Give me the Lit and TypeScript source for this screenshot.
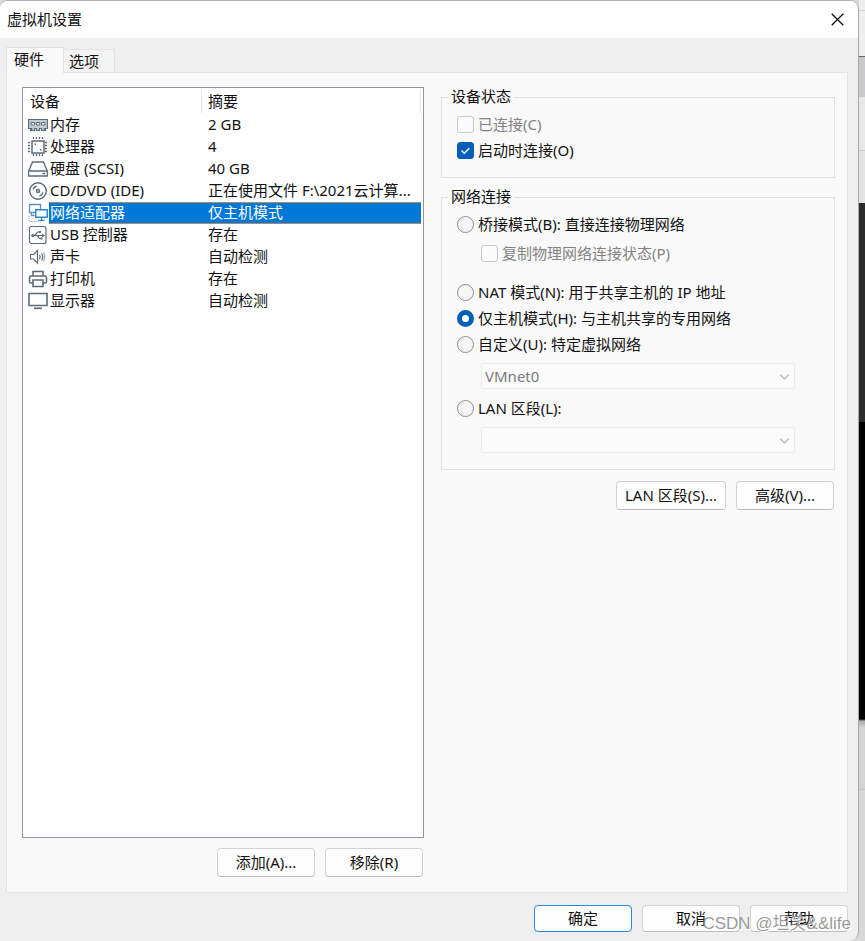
import { LitElement, html, css, svg } from "lit";
import { customElement, property, state } from "lit/decorators.js";
import { classMap } from "lit/directives/class-map.js";

const S = "#5b6b78";

const icons: Record<string, unknown> = {
  memory: svg`<g fill="none" stroke=${S}><path d="M.5 4.500h19v9h-2v2h-4v-2h-2v2h-3v-2h-2v2h-4v-2h-2z" fill="#c3cbd1" stroke-width="1.200"/><path d="M3.500 13v2.500M16.500 13v2.500" stroke-width="1.500"/><path d="M3 7.500h3.500v2.500H3zM8.300 7.500h3.500v2.500H8.300zM13.500 7.500H17v2.500h-3.500z" fill="#fff"/></g>`,
  cpu: svg`<g fill="none" stroke=${S}><path d="M4 4h12v12H4z" stroke-width="1.500"/><path d="M5.500 0v3M8.500 0v3M11.500 0v3M14.500 0v3M5.500 17v3M8.500 17v3M11.500 17v3M14.500 17v3M0 5.500h3M0 8.500h3M0 11.500h3M0 14.500h3M17 5.500h3M17 8.500h3M17 11.500h3M17 14.500h3" stroke-width="1.300" stroke-dasharray="2 1"/><path d="M6.500 6.500h1.500v1.500H6.500zM12 12h1.500v1.500H12z" fill=${S} stroke="none"/></g>`,
  disk: svg`<g fill="none" stroke=${S} stroke-width="1.400"><path d="M4.500 3h11l4 9.500v3.800q0 .7-.7.7H1.200q-.7 0-.7-.7v-3.800z"/><path d="M.7 12h18.600"/><path d="M14.500 14.500h2.500" stroke-width="1.600"/></g>`,
  cd: svg`<g fill="none" stroke=${S} stroke-width="1.400"><circle cx="10" cy="10" r="8.300"/><circle cx="10" cy="10" r="1.500"/><path d="M5 8.500a5.500 5.500 0 0 1 3.500-3.500M15 11.500a5.500 5.500 0 0 1-3.500 3.500"/></g>`,
  net: svg`<g fill="none" stroke="#2f86cc" stroke-width="1.300"><path d="M1.500 1.500h11v8h-11z" stroke="#5f8fb5"/><path d="M3.500 9.500v3h3" stroke="#5f8fb5"/><path d="M7.700 6.700h11.500v7.500H7.700z" fill="#fff" stroke-width="1.500"/><path d="M13.500 14.200v3M10.500 17.300h6"/><path d="M1 13v5.500h10" stroke="#8b9aa6" stroke-width="1" stroke-dasharray="1 1"/></g>`,
  usb: svg`<g fill="none" stroke=${S} stroke-width="1.200"><rect x="1.500" y="1.500" width="16.500" height="17" rx="2"/><path d="M4 10.500h11M6.500 10.500l3-3.500h2M9 10.500l2.500 3h1.500"/><path d="M14 8.800l3 1.700-3 1.700z" fill=${S} stroke="none"/><circle cx="4.700" cy="10.500" r="1.500" fill=${S} stroke="none"/><path d="M11 6h2v2h-2zM12.500 12.500h2v2h-2z" fill=${S} stroke="none"/></g>`,
  sound: svg`<g fill="none" stroke=${S} stroke-width="1.200"><path d="M2.500 7.500h3l4-4v12.500l-4-4h-3z"/><path d="M11.500 8q1.300 2 0 4M13.500 6.500q2.500 3.500 0 7" /><path d="M15.500 5.500q2.500 4.500 0 9" stroke-opacity=".6"/></g>`,
  printer: svg`<g fill="none" stroke=${S} stroke-width="1.600"><path d="M5 7V2.500h10V7M5 14H2.800Q1.500 14 1.500 12.700V8.500Q1.500 7 3 7h14q1.500 0 1.500 1.500v4.200q0 1.300-1.300 1.300H15"/><path d="M5 11h10v6.500H5z"/></g>`,
  display: svg`<g fill="none" stroke=${S} stroke-width="1.600"><path d="M1 2.500h18v12H1z"/><path d="M6 17.300h8"/></g>`,
};

interface Device {
  icon: string;
  name: string;
  summary: string;
}

const devices: Device[] = [
  { icon: "memory", name: "内存", summary: "2 GB" },
  { icon: "cpu", name: "处理器", summary: "4" },
  { icon: "disk", name: "硬盘 (SCSI)", summary: "40 GB" },
  { icon: "cd", name: "CD/DVD (IDE)", summary: "正在使用文件 F:\\2021云计算..." },
  { icon: "net", name: "网络适配器", summary: "仅主机模式" },
  { icon: "usb", name: "USB 控制器", summary: "存在" },
  { icon: "sound", name: "声卡", summary: "自动检测" },
  { icon: "printer", name: "打印机", summary: "存在" },
  { icon: "display", name: "显示器", summary: "自动检测" },
];

const buttonStyles = css`
  button {
    font: inherit;
    color: inherit;
    box-sizing: border-box;
    min-width: 98px;
    height: 29px;
    padding: 0 8px 2px;
    background: #fdfdfd;
    border: 1px solid #d2d2d2;
    border-bottom-color: #bdbdbd;
    border-radius: 4px;
  }
`;

@customElement("device-list")
class DeviceList extends LitElement {
  @state() selected = 4;

  static styles = css`
    :host {
      display: block;
      box-sizing: border-box;
      background: #fff;
      border: 1px solid #8f959e;
      padding-right: 2px;
    }
    table {
      width: 100%;
      border-collapse: separate;
      border-spacing: 0;
      table-layout: fixed;
    }
    .name-col {
      width: 179px;
    }
    th {
      height: 26px;
      padding: 0 0 1px 7px;
      box-sizing: border-box;
      text-align: left;
      font-weight: 400;
      background: linear-gradient(#e5e5e5, #e5e5e5) right 2px / 1px 23px no-repeat;
    }
    th + th {
      padding-left: 6px;
    }
    td {
      height: 22px;
      padding: 0;
      box-sizing: border-box;
      white-space: nowrap;
    }
    td + td {
      padding: 0 0 2px 6px;
    }
    .device {
      display: flex;
      align-items: center;
      padding-left: 5px;
    }
    svg {
      flex: none;
      width: 20px;
      height: 20px;
    }
    .name {
      flex: 1;
      box-sizing: border-box;
      height: 22px;
      padding-left: 1px;
      margin-left: 1px;
    }
    .selected .name,
    .selected td + td {
      background: #0078d7;
      color: #fff;
      box-shadow: inset 0 1px #b5895f, inset 0 -1px #b5895f;
    }
  `;

  render() {
    return html`<table>
      <thead>
        <tr>
          <th class="name-col" scope="col">设备</th>
          <th scope="col">摘要</th>
        </tr>
      </thead>
      <tbody>
        ${devices.map(
          (d, i) => html`<tr
            class=${classMap({ selected: i === this.selected })}
            @click=${() => (this.selected = i)}
          >
            <td>
              <div class="device">
                <svg viewBox="0 0 20 20" aria-hidden="true">${icons[d.icon]}</svg>
                <span class="name">${d.name}</span>
              </div>
            </td>
            <td>${d.summary}</td>
          </tr>`
        )}
      </tbody>
    </table>`;
  }
}

@customElement("combo-box")
class ComboBox extends LitElement {
  @property() value = "";
  @property() label = "";

  static styles = css`
    :host {
      display: block;
      position: relative;
    }
    select {
      appearance: none;
      display: block;
      width: 100%;
      height: 26px;
      box-sizing: border-box;
      padding: 0 24px 0 3px;
      font: inherit;
      color: #7a7a7a;
      opacity: 1;
      background: #fbfbfb;
      border: 1px solid #ebebeb;
      border-radius: 2px;
    }
    svg {
      position: absolute;
      right: 5px;
      top: 9px;
      width: 11px;
      height: 10px;
      fill: none;
      stroke: #bdbdbd;
      stroke-width: 1.3;
    }
  `;

  render() {
    return html`<select disabled aria-label=${this.label}>
        <option>${this.value}</option>
      </select>
      <svg viewBox="0 0 11 10" aria-hidden="true"><path d="M1 2.500l4.500 4.500L10 2.500" /></svg>`;
  }
}

@customElement("network-panel")
class NetworkPanel extends LitElement {
  static styles = [
    buttonStyles,
    css`
      :host {
        display: block;
      }
      fieldset {
        margin: 0 0 9px;
        min-width: 0;
        padding: 4px 15px 14px;
        border: 1px solid #e0e0e0;
      }
      legend {
        margin-left: -9px;
        padding: 0 3px;
        height: 20px;
        line-height: 18px;
      }
      .network {
        margin-bottom: 11px;
        padding-bottom: 16px;
      }
      label {
        display: flex;
        align-items: center;
        gap: 4px;
        height: 26px;
        white-space: nowrap;
      }
      .disabled {
        color: #838383;
      }
      .sub {
        margin: 3px 0 13px 24px;
      }
      combo-box {
        margin: 6px 24px;
      }
      combo-box:last-child {
        margin-bottom: 0;
      }
      input {
        appearance: none;
        flex: none;
        box-sizing: border-box;
        width: 17px;
        height: 17px;
        margin: 0;
        border: 1px solid #8c8c8c;
        background: #f5f5f5;
      }
      input[type="checkbox"] {
        border-radius: 3px;
      }
      input[type="radio"] {
        border-radius: 50%;
      }
      input:disabled {
        border-color: #c8c8c8;
        background: #fbfbfb;
      }
      input[type="radio"]:checked {
        border: 5px solid #0060b9;
        background: #fff;
      }
      .check {
        display: grid;
      }
      .check > * {
        grid-area: 1 / 1;
      }
      .check input:checked {
        border-color: #0060b9;
        background: #0060b9;
      }
      .check svg {
        width: 17px;
        height: 17px;
        fill: none;
        stroke: #fff;
        stroke-width: 1.3;
        pointer-events: none;
      }
      .actions {
        display: flex;
        justify-content: flex-end;
        gap: 10px;
        padding-right: 1px;
      }
    `,
  ];

  render() {
    return html`
      <fieldset>
        <legend>设备状态</legend>
        <label class="disabled"><input type="checkbox" disabled />已连接(C)</label>
        <label>
          <span class="check">
            <input type="checkbox" checked />
            <svg viewBox="0 0 17 17" aria-hidden="true"><path d="M4.500 8.500l2.800 2.800 5-5" /></svg>
          </span>
          启动时连接(O)
        </label>
      </fieldset>
      <fieldset class="network">
        <legend>网络连接</legend>
        <label><input type="radio" name="mode" />桥接模式(B): 直接连接物理网络</label>
        <label class="disabled sub"><input type="checkbox" disabled />复制物理网络连接状态(P)</label>
        <label><input type="radio" name="mode" />NAT 模式(N): 用于共享主机的 IP 地址</label>
        <label><input type="radio" name="mode" checked />仅主机模式(H): 与主机共享的专用网络</label>
        <label><input type="radio" name="mode" />自定义(U): 特定虚拟网络</label>
        <combo-box value="VMnet0" label="特定虚拟网络"></combo-box>
        <label><input type="radio" name="mode" />LAN 区段(L):</label>
        <combo-box label="LAN 区段"></combo-box>
      </fieldset>
      <div class="actions">
        <button type="button">LAN 区段(S)...</button>
        <button type="button">高级(V)...</button>
      </div>
    `;
  }
}

@customElement("app-root")
class AppRoot extends LitElement {
  static styles = [
    buttonStyles,
    css`
      :host {
        display: grid;
        grid-template-columns: minmax(0, 1fr) 6px;
        position: relative;
        min-height: 100vh;
        font: 15px/20px "Noto Sans", "Noto Sans CJK SC", sans-serif;
        color: #111;
        background: #d8d8d8;
      }
      .window {
        display: flex;
        flex-direction: column;
        box-sizing: border-box;
        background: #efefef;
        border-top: 1px solid #b0b0b0;
        border-right: 1px solid #a8a8a8;
        border-radius: 8px 9px 9px 0;
        overflow: hidden;
      }
      .backdrop {
        background: linear-gradient(
          #eee 0 10px, #d0d0d0 10px 11px, #eee 11px 56px, #666 56px 57px,
          #c9c9cc 57px 97px, #e8e8e8 97px 150px, #ccc 150px 151px,
          #e4e4e4 151px 203px, #2c2c2c 203px 422px, #000 422px 719px,
          #aaa 721px, #d4d4d4 728px 789px, #c4c4c4 789px 790px, #d8d8d8 790px
        );
      }
      header {
        display: flex;
        align-items: center;
        justify-content: space-between;
        height: 37px;
        padding: 0 10px 0 7px;
        background: #fff;
      }
      h1 {
        margin: 0;
        padding-bottom: 2px;
        font-size: 15px;
        font-weight: 400;
      }
      .close {
        display: grid;
        place-items: center;
        min-width: 0;
        width: 21px;
        height: 21px;
        padding: 0;
        border: 0;
        background: none;
      }
      .close svg {
        width: 13px;
        height: 13px;
        stroke: #111;
        stroke-width: 1.3;
      }
      .tabs {
        display: flex;
        align-items: flex-end;
        height: 25px;
        padding: 9px 0 0 6px;
      }
      .tabs button {
        min-width: 0;
        height: 23px;
        padding: 0 15px 0 5px;
        border: 1px solid #e2e2e2;
        border-width: 1px 1px 0 0;
        border-radius: 0;
        background: #f3f3f3;
      }
      .tabs .active {
        position: relative;
        height: 26px;
        margin-bottom: -1px;
        padding: 0 19px 3px 7px;
        border-width: 1px 1px 0 1px;
        background: #f9f9f9;
      }
      .pane {
        flex: 1;
        display: grid;
        grid-template-columns: 402fr 394fr;
        gap: 17px;
        margin: 0 10px 0 6px;
        padding: 14px 12px 15px 15px;
        background: #f9f9f9;
        border: 1px solid #e4e4e4;
      }
      .hardware {
        display: flex;
        flex-direction: column;
        gap: 10px;
        min-width: 0;
      }
      device-list {
        flex: 1;
      }
      .actions,
      footer {
        display: flex;
        justify-content: flex-end;
        gap: 10px;
        padding-right: 1px;
      }
      footer {
        padding: 12px 10px 9px;
      }
      footer button {
        height: 27px;
      }
      .default {
        border-color: #2b88d8;
      }
      .watermark {
        position: absolute;
        right: 14px;
        bottom: 7px;
        font: 17px/20px "Liberation Sans", "Noto Sans CJK SC", sans-serif;
        color: rgba(120, 120, 120, 0.75);
        text-shadow: 1px 1px #fff;
        pointer-events: none;
      }
    `,
  ];

  render() {
    return html`
      <main class="window">
        <header>
          <h1>虚拟机设置</h1>
          <button class="close" type="button" aria-label="关闭">
            <svg viewBox="0 0 13 13" aria-hidden="true"><path d="M.7.7l11.600 11.600M12.300.7L.7 12.300" /></svg>
          </button>
        </header>
        <nav class="tabs" role="tablist">
          <button class="active" type="button" role="tab" aria-selected="true">硬件</button>
          <button type="button" role="tab" aria-selected="false">选项</button>
        </nav>
        <section class="pane">
          <div class="hardware">
            <device-list></device-list>
            <div class="actions">
              <button type="button">添加(A)...</button>
              <button type="button">移除(R)</button>
            </div>
          </div>
          <network-panel></network-panel>
        </section>
        <footer>
          <button class="default" type="button">确定</button>
          <button type="button">取消</button>
          <button type="button">帮助</button>
        </footer>
      </main>
      <div class="backdrop"></div>
      <div class="watermark">CSDN @坦笑&amp;&amp;life</div>
    `;
  }
}
